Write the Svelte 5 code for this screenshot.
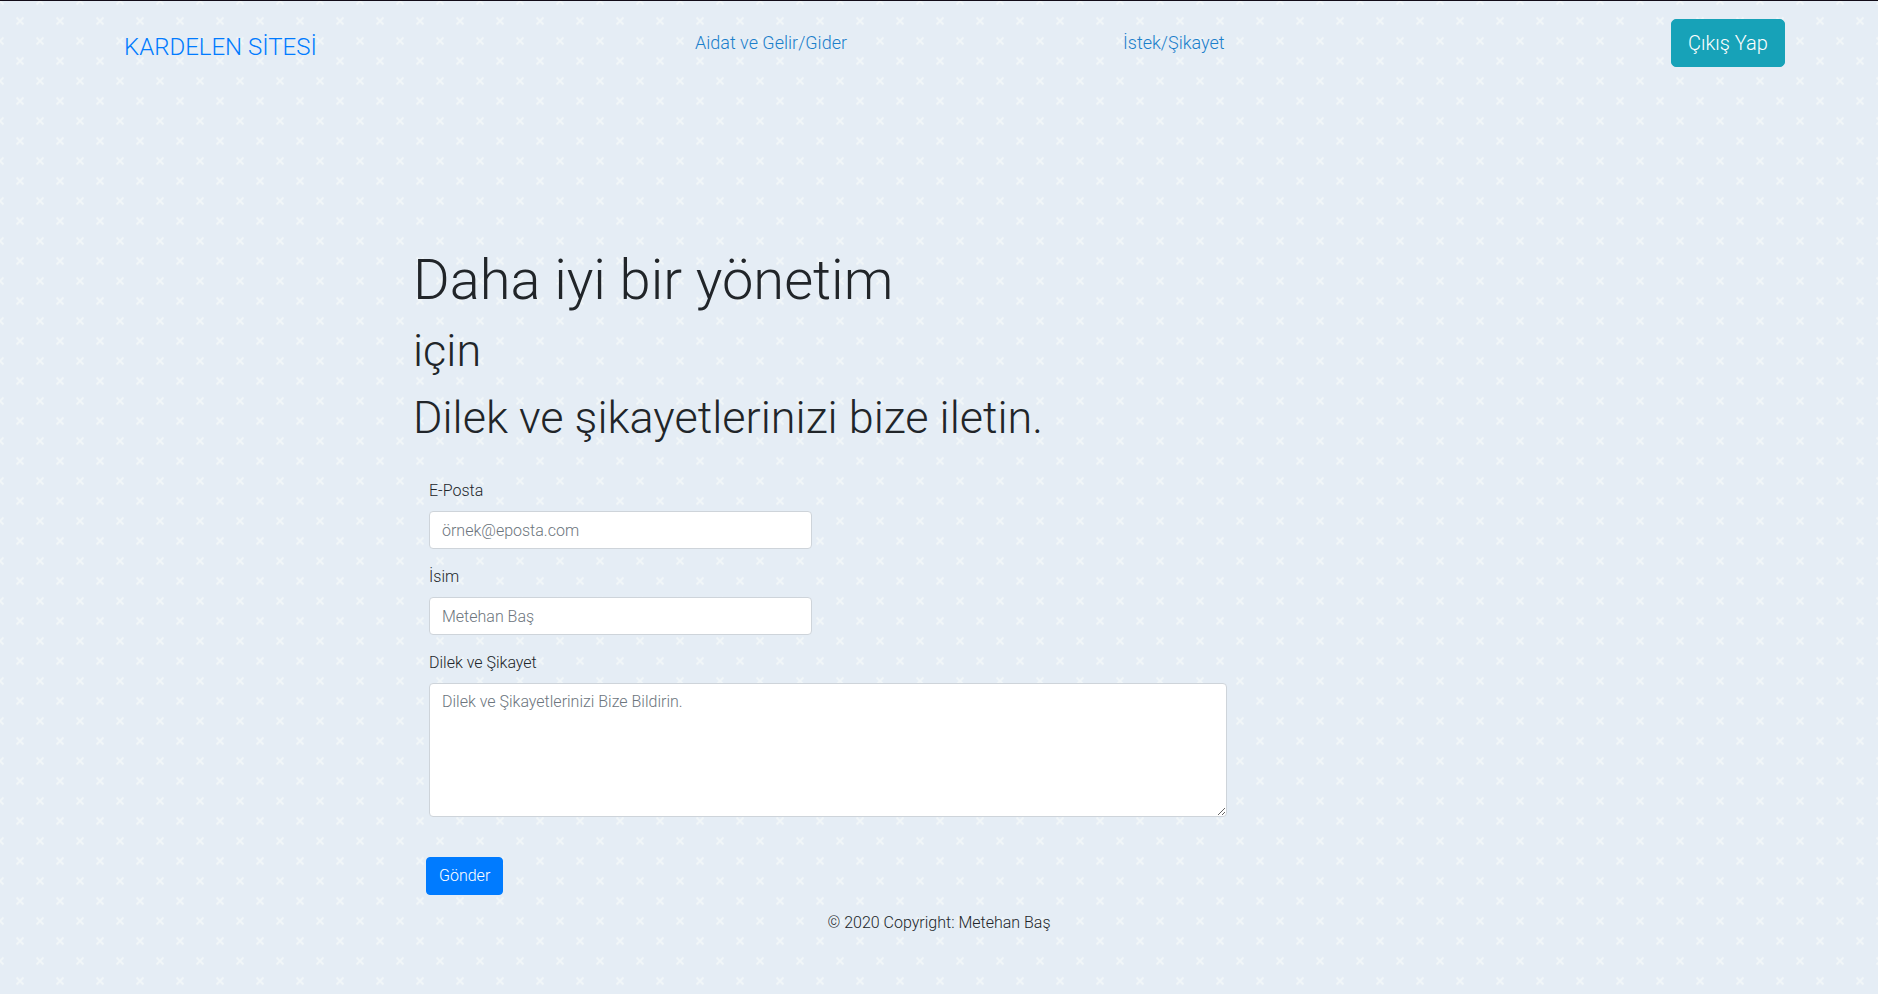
<script>
  const links = [
    { label: 'Aidat ve Gelir/Gider', href: '#aidat' },
    { label: 'İstek/Şikayet', href: '#istek' }
  ];
  let email = $state('');
  let name = $state('');
  let message = $state('');
</script>

<div class="page">
  <nav>
    <a class="brand" href="#top">KARDELEN SİTESİ</a>
    {#each links as link}
      <a class="link" href={link.href}>{link.label}</a>
    {/each}
    <button class="btn logout" type="button">Çıkış Yap</button>
  </nav>

  <main>
    <div class="content">
      <h1>
        Daha iyi bir yönetim<br />
        <small>için</small><br />
        <small>Dilek ve şikayetlerinizi bize iletin.</small>
      </h1>
      <form onsubmit={(e) => e.preventDefault()}>
        <div class="group half">
          <label for="email">E-Posta</label>
          <input id="email" type="email" placeholder="örnek@eposta.com" bind:value={email} />
        </div>
        <div class="group half">
          <label for="name">İsim</label>
          <input id="name" type="text" placeholder="Metehan Baş" bind:value={name} />
        </div>
        <div class="group">
          <label for="message">Dilek ve Şikayet</label>
          <textarea id="message" rows="5" placeholder="Dilek ve Şikayetlerinizi Bize Bildirin." bind:value={message}></textarea>
        </div>
        <button class="btn send" type="submit">Gönder</button>
      </form>
    </div>
  </main>

  <footer>© 2020 Copyright: Metehan Baş</footer>
</div>

<style>
  :global(body) {
    margin: 0;
    background-color: #e5edf5;
    background-image: url("data:image/svg+xml,%3Csvg xmlns='http://www.w3.org/2000/svg' width='40' height='40'%3E%3Cpath d='M-3.5-3.5l7 7M-3.5 3.5l7-7M36.5-3.5l7 7M36.5 3.5l7-7M-3.5 36.5l7 7M-3.5 43.5l7-7M36.5 36.5l7 7M36.5 43.5l7-7M16.5 16.5l7 7M16.5 23.5l7-7' stroke='%23f1f6f8' stroke-width='1.8' fill='none'/%3E%3C/svg%3E");
    background-position: 0 1px;
  }

  .page {
    min-height: 100vh;
    box-sizing: border-box;
    border-top: 1px solid #120c18;
    font-family: Roboto, sans-serif;
    font-size: 16px;
    font-weight: 300;
    line-height: 24px;
    color: #212529;
  }

  nav {
    display: grid;
    grid-template-columns: 571fr 428fr 548fr 114px;
    align-items: start;
    padding: 18px 93px 18px 124px;
  }

  nav a {
    justify-self: start;
    text-decoration: none;
  }

  .brand {
    padding-top: 10px;
    font-size: 24px;
    line-height: 36px;
    color: #007bff;
  }

  .link {
    padding-top: 10px;
    font-size: 18px;
    line-height: 28px;
    color: #1b7fcb;
  }

  .btn {
    box-sizing: border-box;
    border: 1px solid;
    border-radius: 4px;
    font-family: inherit;
    font-weight: 300;
    color: #fff;
    cursor: pointer;
  }

  .logout {
    padding: 8px 16px;
    border-color: #17a2b8;
    border-radius: 5px;
    background: #17a2b8;
    font-size: 20px;
    line-height: 30px;
    white-space: nowrap;
  }

  main {
    display: grid;
    grid-template-columns: 413fr 830fr 635fr;
    padding-top: 162px;
  }

  .content {
    grid-column: 2;
  }

  h1 {
    margin: 0;
    font-size: 56px;
    font-weight: 300;
    line-height: 67px;
    white-space: nowrap;
  }

  small {
    font-size: 45px;
    line-height: 1;
  }

  form {
    padding-top: 31px;
  }

  .group {
    padding: 0 16px;
    margin-bottom: 16px;
  }

  .half {
    width: 50%;
    box-sizing: border-box;
  }

  label {
    display: block;
    margin-bottom: 8px;
  }

  input,
  textarea {
    display: block;
    width: 100%;
    box-sizing: border-box;
    padding: 6px 12px;
    border: 1px solid #ced4da;
    border-radius: 4px;
    background: #fff;
    font: inherit;
    color: #495057;
  }

  input {
    height: 38px;
  }

  textarea {
    resize: vertical;
  }

  ::placeholder {
    color: #6c757d;
    opacity: 1;
  }

  .send {
    margin: 24px 13px 0;
    padding: 6px 12px;
    border-color: #007bff;
    background: #007bff;
    font-size: 16px;
    line-height: 24px;
  }

  footer {
    padding: 16px;
    text-align: center;
  }
</style>
